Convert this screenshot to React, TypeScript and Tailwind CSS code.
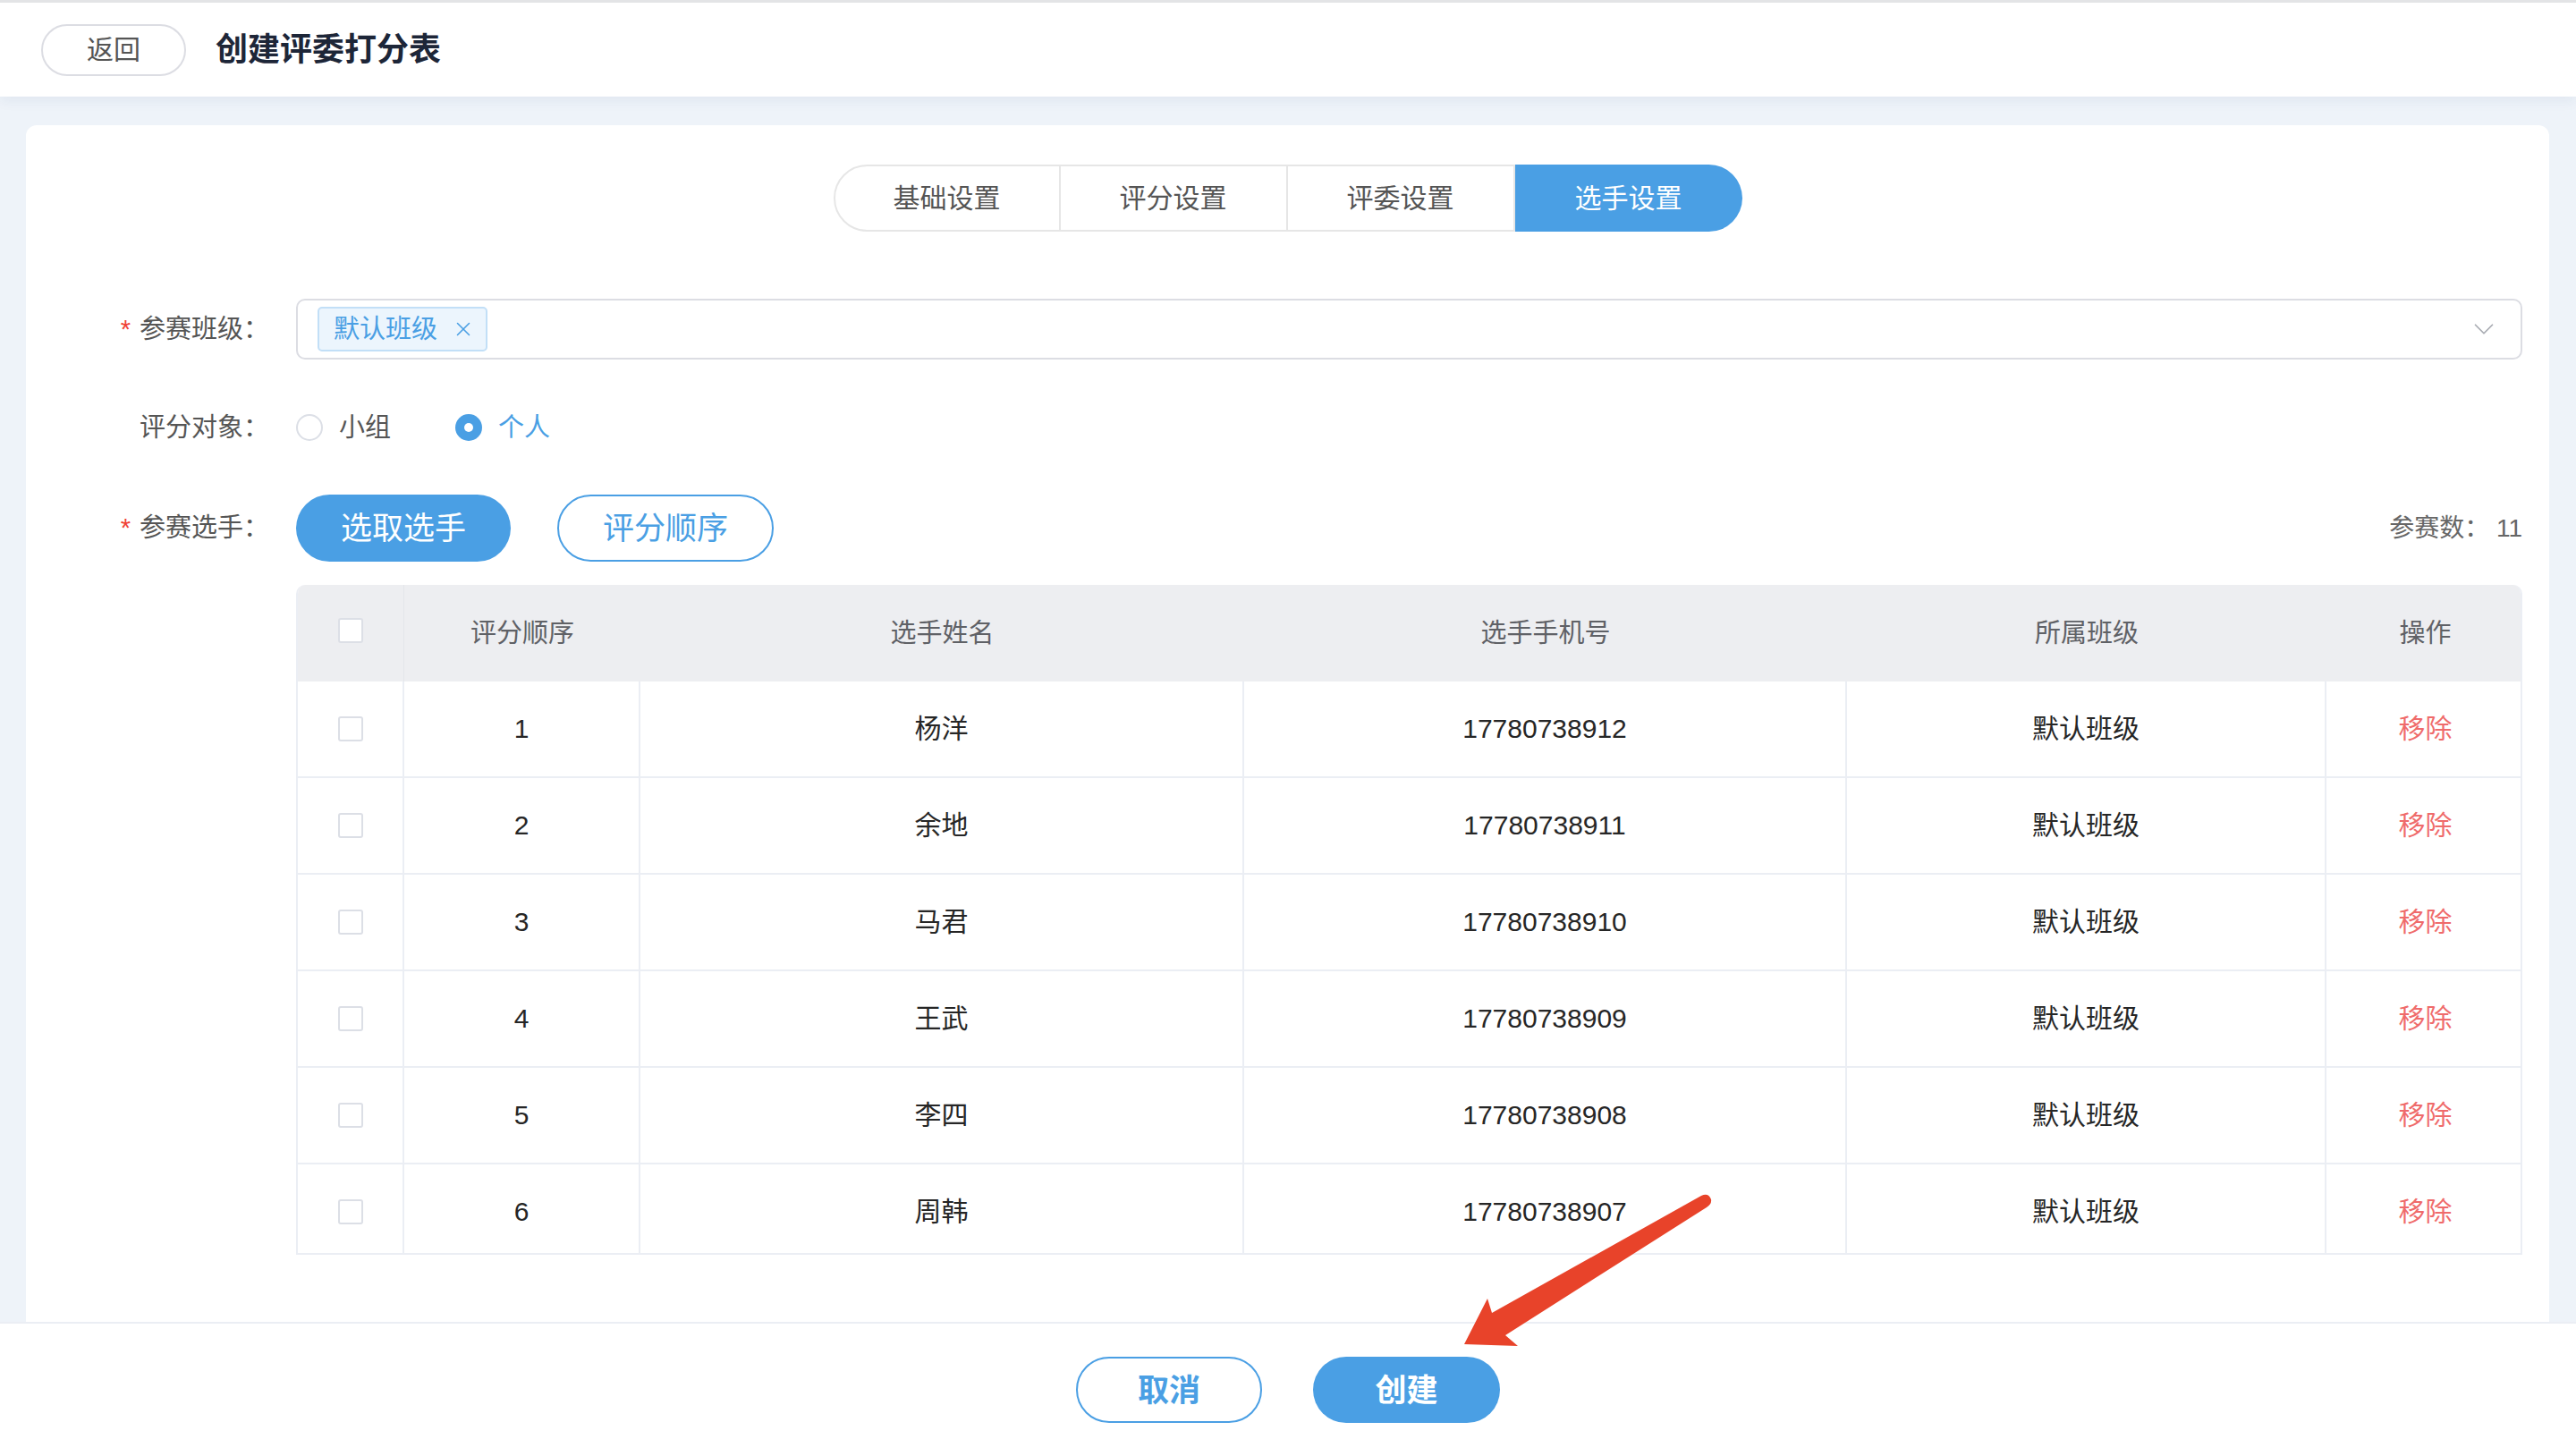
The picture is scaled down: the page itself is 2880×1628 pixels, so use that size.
import { ChevronDown, X } from 'lucide-react';

const players = [
  { order: 1, name: '杨洋', phone: '17780738912' },
  { order: 2, name: '余地', phone: '17780738911' },
  { order: 3, name: '马君', phone: '17780738910' },
  { order: 4, name: '王武', phone: '17780738909' },
  { order: 5, name: '李四', phone: '17780738908' },
  { order: 6, name: '周韩', phone: '17780738907' },
];

const tabs = ['基础设置', '评分设置', '评委设置', '选手设置'];

const cols = 'grid grid-cols-[119px_264px_675px_674px_536px_221px]';

function Checkbox() {
  return <span className="block w-[28px] h-[28px] rounded-[3px] border-2 border-[#dcdfe6] bg-white" />;
}

function FormLabel({ text, required }: { text: string; required?: boolean }) {
  return (
    <div className="w-[302px] shrink-0 pr-[30px] text-right text-[29px] text-[#555] leading-none">
      {required && <span className="text-[#f04134] mr-[10px]">*</span>}
      {text}：
    </div>
  );
}

export default function App() {
  return (
    <div
      className="relative h-[1628px] w-full flex flex-col bg-[#eef3f9] overflow-hidden"
      style={{ fontFamily: '"Liberation Sans", "Noto Sans CJK SC", sans-serif' }}
    >
      <header className="relative z-10 h-[108px] shrink-0 bg-white border-t-[3px] border-[#e3e4e6] shadow-[0_4px_14px_rgba(30,60,110,0.07)] flex items-center pl-[46px] gap-[33px]">
        <button className="w-[162px] h-[58px] rounded-full border-2 border-[#dcdde3] text-[30px] text-[#555] leading-none">
          返回
        </button>
        <h1 className="text-[36px] font-bold text-[#1d2638] leading-none">创建评委打分表</h1>
      </header>

      <main className="flex-1 min-h-0 pt-[32px] pl-[29px] pr-[30px]">
        <div className="h-full bg-white rounded-t-[12px] pt-[44px] pr-[30px] overflow-hidden">
          {/* step tabs */}
          <div className="flex justify-center pl-[30px]">
            <div className="flex h-[75px]">
              {tabs.map((t, i) => {
                const active = i === tabs.length - 1;
                return (
                  <div
                    key={t}
                    className={
                      'w-[254px] flex items-center justify-center text-[30px] leading-none ' +
                      (active
                        ? 'bg-[#4a9fe4] text-white rounded-r-full'
                        : 'bg-white text-[#555] border-y-2 border-r-2 border-[#e6e6e6] ' +
                          (i === 0 ? 'border-l-2 rounded-l-full' : ''))
                    }
                  >
                    {t}
                  </div>
                );
              })}
            </div>
          </div>

          {/* 参赛班级 */}
          <div className="flex items-center mt-[75px]">
            <FormLabel text="参赛班级" required />
            <div className="flex-1 h-[68px] border-2 border-[#dcdde3] rounded-[10px] flex items-center pl-[22px] pr-[22px]">
              <span className="h-[50px] pl-[16px] pr-[12px] flex items-center gap-[16px] bg-[#ecf5fd] border-2 border-[#c2dff7] rounded-[5px] text-[29px] text-[#4a9fe4] leading-none">
                默认班级
                <X className="w-[26px] h-[26px]" strokeWidth={1.4} />
              </span>
              <div className="flex-1" />
              <ChevronDown className="w-[38px] h-[38px] text-[#a8abb2]" strokeWidth={1.1} />
            </div>
          </div>

          {/* 评分对象 */}
          <div className="flex items-center h-[68px] mt-[42px]">
            <FormLabel text="评分对象" />
            <div className="flex items-center gap-[72px]">
              <label className="flex items-center gap-[18px] text-[29px] text-[#555] leading-none">
                <span className="w-[30px] h-[30px] rounded-full border-2 border-[#dcdfe6] bg-white" />
                小组
              </label>
              <label className="flex items-center gap-[18px] text-[29px] text-[#4a9fe4] leading-none">
                <span className="w-[30px] h-[30px] rounded-full bg-[#4a9fe4] flex items-center justify-center">
                  <span className="w-[10px] h-[10px] rounded-full bg-white" />
                </span>
                个人
              </label>
            </div>
          </div>

          {/* 参赛选手 */}
          <div className="flex items-center mt-[41px]">
            <FormLabel text="参赛选手" required />
            <div className="flex-1 flex items-center gap-[52px]">
              <button className="w-[240px] h-[75px] rounded-full bg-[#4a9fe4] text-white text-[35px] leading-none">
                选取选手
              </button>
              <button className="w-[242px] h-[75px] rounded-full border-2 border-[#4a9fe4] bg-white text-[#4a9fe4] text-[35px] leading-none">
                评分顺序
              </button>
              <div className="flex-1" />
              <span className="text-[28px] text-[#666] leading-none">参赛数： 11</span>
            </div>
          </div>

          {/* player table, scrolled so the last row is partly hidden */}
          <div className="mt-[26px] pl-[302px]">
            <div className="h-[749px] overflow-hidden rounded-t-[10px] border-x-2 border-b-2 border-[#ebeef4]">
              <div className={cols + ' h-[108px] bg-[#edeef1] text-[29px] text-[#5f6166] leading-none'}>
                <div className="flex items-center justify-center pb-[6px] border-r border-[#e4e6ea]">
                  <Checkbox />
                </div>
                <div className="flex items-center justify-center">评分顺序</div>
                <div className="flex items-center justify-center">选手姓名</div>
                <div className="flex items-center justify-center">选手手机号</div>
                <div className="flex items-center justify-center">所属班级</div>
                <div className="flex items-center justify-center">操作</div>
              </div>
              {players.map((p) => (
                <div
                  key={p.order}
                  className={cols + ' h-[108px] border-b-2 border-[#ebeef4] text-[30px] text-[#262626] leading-none'}
                >
                  <div className="flex items-center justify-center border-r-2 border-[#ebeef4]">
                    <Checkbox />
                  </div>
                  <div className="flex items-center justify-center border-r-2 border-[#ebeef4]">{p.order}</div>
                  <div className="flex items-center justify-center border-r-2 border-[#ebeef4]">{p.name}</div>
                  <div className="flex items-center justify-center border-r-2 border-[#ebeef4]">{p.phone}</div>
                  <div className="flex items-center justify-center border-r-2 border-[#ebeef4]">默认班级</div>
                  <div className="flex items-center justify-center text-[#ef6b6b]">移除</div>
                </div>
              ))}
            </div>
          </div>
        </div>
      </main>

      <footer className="h-[150px] shrink-0 bg-white border-t-2 border-[#ebeef4] flex items-center justify-center gap-[57px]">
        <button className="w-[208px] h-[74px] rounded-full border-2 border-[#4a9fe4] bg-white text-[#4a9fe4] text-[35px] font-bold leading-none">
          取消
        </button>
        <button className="w-[209px] h-[74px] rounded-full bg-[#4a9fe4] text-white text-[35px] font-bold leading-none">
          创建
        </button>
      </footer>

      {/* red pointer arrow over the create button */}
      <svg
        className="absolute left-[1620px] top-[1320px] pointer-events-none"
        width="300"
        height="200"
        viewBox="0 0 300 200"
      >
        <path
          d="M17 183 L43 132 L48 148 L282 17 Q290 13 293 21 Q294 26 288 30 L63 173 L77 185 Z"
          fill="#e8432a"
        />
      </svg>
    </div>
  );
}
